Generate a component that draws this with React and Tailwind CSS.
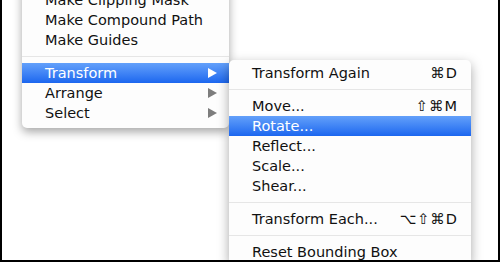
const mainItems = [
  { label: 'Make Clipping Mask' },
  { label: 'Make Compound Path' },
  { label: 'Make Guides' },
  { sep: true },
  { label: 'Transform', arrow: true, active: true },
  { label: 'Arrange', arrow: true },
  { label: 'Select', arrow: true },
];

const subItems = [
  { label: 'Transform Again', key: '⌘D' },
  { sep: true },
  { label: 'Move...', key: '⇧⌘M' },
  { label: 'Rotate...', active: true },
  { label: 'Reflect...' },
  { label: 'Scale...' },
  { label: 'Shear...' },
  { sep: true },
  { label: 'Transform Each...', key: '⌥⇧⌘D' },
  { sep: true },
  { label: 'Reset Bounding Box' },
];

const Arrow = ({ active }) => (
  <svg width="9" height="10" viewBox="0 0 9 10">
    <path d="M0 0 L9 5 L0 10 Z" fill={active ? '#ffffff' : '#7d7d7d'} />
  </svg>
);

const Row = ({ item, padRight }) => {
  if (item.sep) {
    return (
      <div className="h-[13px] flex items-center">
        <div className="h-px w-full bg-[#e6e6e6]" />
      </div>
    );
  }
  return (
    <div
      className={`h-[20px] flex items-center justify-between pl-[23px] ${padRight} ${
        item.active
          ? 'bg-gradient-to-b from-[#63a0fa] to-[#1b66ef] text-white'
          : 'text-[#111111]'
      }`}
    >
      <span>{item.label}</span>
      {item.key && <span className="tracking-[1px]">{item.key}</span>}
      {item.arrow && <Arrow active={item.active} />}
    </div>
  );
};

export default function App() {
  return (
    <div className="w-[500px] h-[262px] overflow-hidden bg-white border-x-2 border-b-2 border-black">
      <div
        className="flex items-start pl-[20px] text-[14.5px] leading-[20px]"
        style={{ fontFamily: '"DejaVu Sans", "Liberation Sans", sans-serif' }}
      >
        {/* Main menu */}
        <div className="-mt-[13px] w-[207px] pt-[3px] pb-[5px] bg-[#fdfdfd] rounded-b-[5px] shadow-[0_4px_10px_rgba(0,0,0,0.35)] z-10">
          {mainItems.map((item, i) => (
            <Row key={i} item={item} padRight="pr-[12px]" />
          ))}
        </div>

        {/* Transform submenu */}
        <div className="mt-[60px] w-[242px] pt-[3px] bg-[#fdfdfd] rounded-t-[5px] shadow-[0_4px_12px_rgba(0,0,0,0.35)] z-20">
          {subItems.map((item, i) => (
            <Row key={i} item={item} padRight="pr-[13px]" />
          ))}
        </div>
      </div>
    </div>
  );
}
